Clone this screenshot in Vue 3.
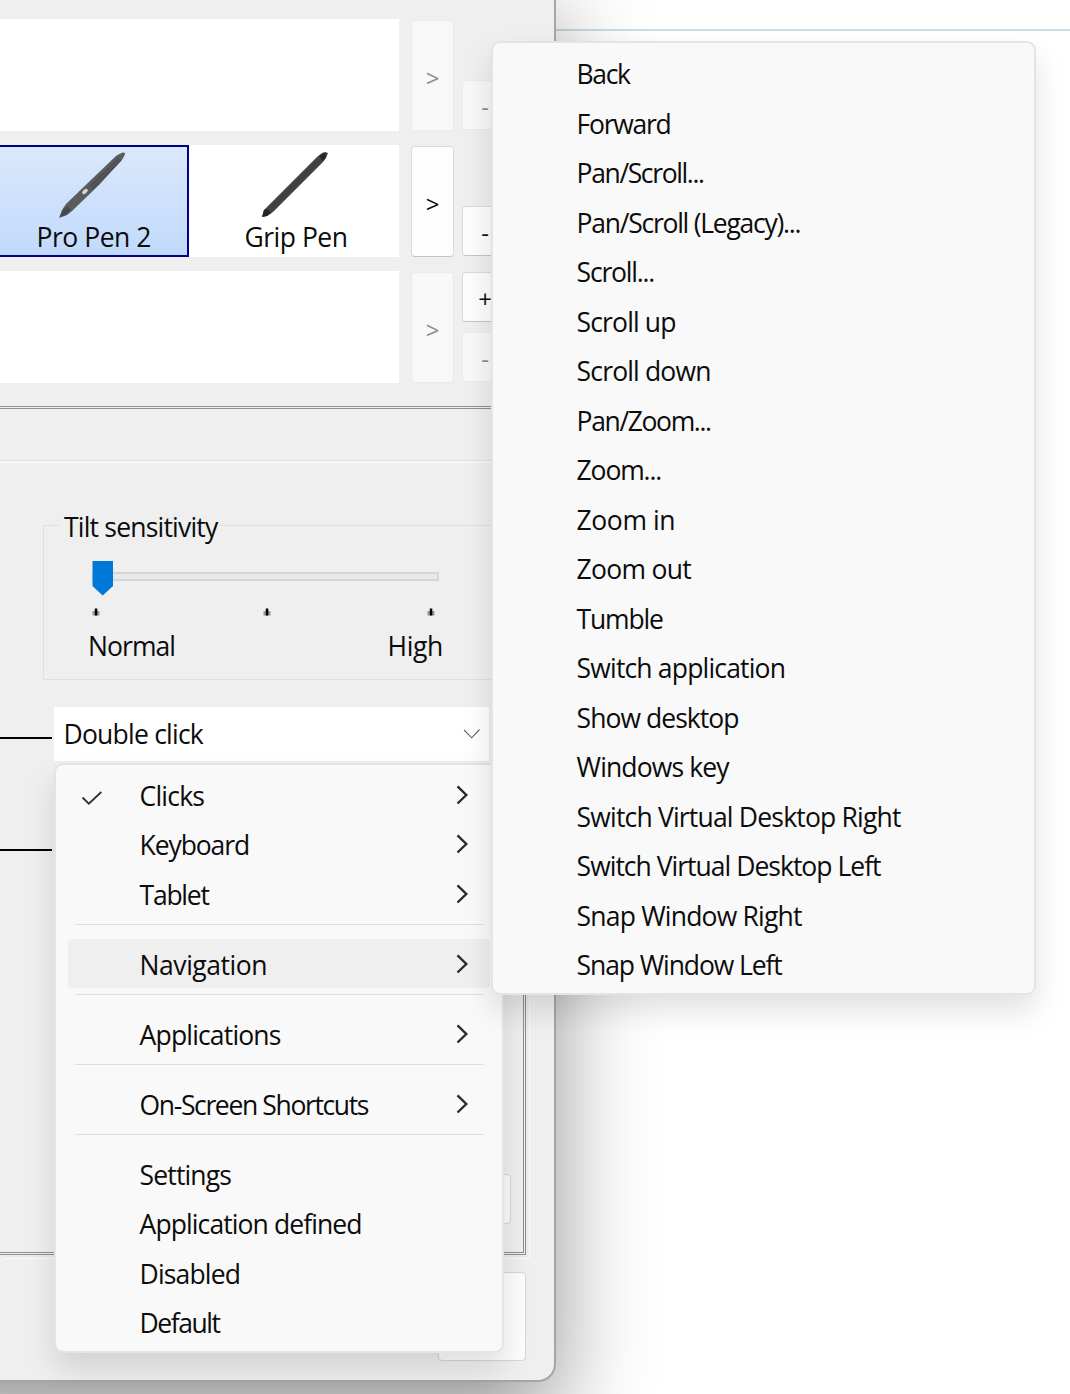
<script setup>
// Each label carries the width its text should occupy; tracking is derived from it.
const vFit = (el, { value }) => {
  el.style.letterSpacing = '0px'
  const natural = el.getBoundingClientRect().width
  el.style.letterSpacing = `${(value - natural) / el.textContent.length}px`
}

const deviceRows = [
  { tools: [], active: false, plus: false },
  {
    tools: [
      { name: 'Pro Pen 2', width: 114.5, selected: true },
      { name: 'Grip Pen', width: 103, selected: false },
    ],
    active: true,
    plus: false,
  },
  { tools: [], active: false, plus: true },
]

const actionGroups = [
  [
    { label: 'Clicks', width: 64.5, sub: true, checked: true },
    { label: 'Keyboard', width: 109.5, sub: true },
    { label: 'Tablet', width: 69, sub: true },
  ],
  [{ label: 'Navigation', width: 127.5, sub: true, open: true }],
  [{ label: 'Applications', width: 141, sub: true }],
  [{ label: 'On-Screen Shortcuts', width: 228.5, sub: true }],
  [
    { label: 'Settings', width: 91.5 },
    { label: 'Application defined', width: 222 },
    { label: 'Disabled', width: 100.5 },
    { label: 'Default', width: 80 },
  ],
]

const navigation = [
  ['Back', 53], ['Forward', 94], ['Pan/Scroll...', 127], ['Pan/Scroll (Legacy)...', 223.5],
  ['Scroll...', 77.5], ['Scroll up', 99], ['Scroll down', 134], ['Pan/Zoom...', 134],
  ['Zoom...', 84.5], ['Zoom in', 98.5], ['Zoom out', 114.5], ['Tumble', 86],
  ['Switch application', 208.5], ['Show desktop', 162], ['Windows key', 152],
  ['Switch Virtual Desktop Right', 324], ['Switch Virtual Desktop Left', 304],
  ['Snap Window Right', 225], ['Snap Window Left', 205],
]
</script>

<template>
  <div class="screen">
    <div class="page-rule"></div>

    <div class="window">
      <div class="devices">
        <div v-for="(row, i) in deviceRows" :key="i" class="device-row">
          <div class="list">
            <div v-for="tool in row.tools" :key="tool.name" class="tool" :class="{ selected: tool.selected }">
              <svg v-if="tool.selected" class="pen" width="72" height="70" viewBox="0 0 72 70">
                <path d="M2 66 L5 58 L9 52 L36 26 L59 4 Q66 -1 68 1 Q68 4 64 9 L42 33 L15 59 L10 63 Z" fill="#5a5c5f" />
                <path d="M33 35 L62 6 M35 37 L64 8" stroke="#47494c" stroke-width="1.2" />
                <path d="M3 65 L6 58 L10 54 L14 58 L9 63 Z" fill="#48494c" />
                <ellipse cx="28" cy="39.5" rx="3.2" ry="1.9" transform="rotate(-45 28 39.5)" fill="#d8d8d8" />
              </svg>
              <svg v-else class="pen" width="72" height="70" viewBox="0 0 72 70">
                <path d="M3 65 L5 58 L58 5 L63 1 L66 0 L69 1 L67 6 L64 10 L14 60 L8 64 Z" fill="#414244" />
                <path d="M3 65 L5 58 L8 57 L12 61 L8 64 Z M60 4 L66 1 L67 5 L64 9 Z" fill="#242527" />
              </svg>
              <div class="tool-name"><span v-fit="tool.width">{{ tool.name }}</span></div>
            </div>
          </div>
          <div class="btn next" :class="{ off: !row.active }">&gt;</div>
          <div class="stack">
            <div v-if="row.plus" class="btn small">+</div>
            <div class="btn small" :class="{ off: !row.active }">-</div>
          </div>
        </div>
      </div>

      <div class="frame">
        <div class="tab-strip"></div>
        <div class="tab-page">
          <div class="group">
            <div class="legend"><span v-fit="153.5">Tilt sensitivity</span></div>
            <div class="slider">
              <div class="track"></div>
              <svg class="thumb" width="22" height="35" viewBox="0 0 22 35">
                <path d="M.5 0 H21 V25 L10.7 34.5 L.5 25 Z" fill="#0078d7" />
              </svg>
            </div>
            <div class="ticks">
              <svg v-for="n in 3" :key="n" width="8" height="8" viewBox="0 0 8 8">
                <path d="M.5 3 H7.5 V7.5 H.5 Z" fill="#999" />
                <path d="M2.8 .5 H5.3 V7.5 H2.8 Z" fill="#000" />
              </svg>
            </div>
            <div class="scale">
              <div><span v-fit="87">Normal</span></div>
              <div><span v-fit="55.5">High</span></div>
            </div>
          </div>
          <div class="setting">
            <div class="leader"></div>
            <div class="combo">
              <div><span v-fit="139.5">Double click</span></div>
              <svg width="18" height="12" viewBox="0 0 18 12">
                <path d="M1 2 L8.7 9.8 L16.5 1.5" fill="none" stroke="#666" stroke-width="1.1" />
              </svg>
            </div>
          </div>
          <div class="leader second"></div>
          <div class="hidden-btn"></div>
        </div>
      </div>
      <div class="footer-btn"></div>
    </div>

    <div class="menu actions">
      <template v-for="(group, g) in actionGroups" :key="g">
        <div v-if="g" class="sep"></div>
        <div v-for="item in group" :key="item.label" class="item" :class="{ open: item.open }">
          <div class="mark">
            <svg v-if="item.checked" width="22" height="16" viewBox="0 0 22 16">
              <path d="M1.5 7.5 L7.8 13.6 L20.3 2" fill="none" stroke="#333" stroke-width="1.9" />
            </svg>
          </div>
          <div class="label"><span v-fit="item.width">{{ item.label }}</span></div>
          <svg v-if="item.sub" class="arrow" width="13" height="20" viewBox="0 0 13 20">
            <path d="M1.5 1.3 L10.3 10 L1.5 18.5" fill="none" stroke="#2b2b2b" stroke-width="2.4" />
          </svg>
        </div>
      </template>
    </div>

    <div class="menu nav">
      <div v-for="[label, width] in navigation" :key="label" class="item">
        <div class="label"><span v-fit="width">{{ label }}</span></div>
      </div>
    </div>
  </div>
</template>

<style>
body {
  margin: 0;
}
</style>

<style scoped>
.screen {
  position: relative;
  width: 1070px;
  height: 1394px;
  overflow: hidden;
  background: #fff;
  color: #0c0c0c;
  font: 26.5px/36px "Open Sans", "Noto Sans", sans-serif;
  font-stretch: 94%;
  white-space: nowrap;
}
.screen * {
  box-sizing: border-box;
}
svg {
  display: block;
  flex: none;
}
.page-rule {
  position: absolute;
  top: 29px;
  left: 0;
  right: 0;
  height: 2px;
  background: #cfdde6;
}
.window {
  position: absolute;
  left: -100px;
  top: -20px;
  width: 656px;
  height: 1402px;
  padding: 39px 0 0 100px;
  background: #efefef;
  border: solid #a5a5a5;
  border-width: 0 2px 2px 0;
  border-radius: 0 0 18px 0;
  box-shadow: 0 38px 96px rgba(0, 0, 0, 0.42);
}
.devices {
  display: flex;
  flex-direction: column;
  gap: 14px;
}
.device-row {
  display: flex;
  height: 112px;
}
.list {
  display: flex;
  width: 399px;
  margin-right: 12px;
  background: #fff;
}
.tool {
  width: 210px;
  padding-top: 7px;
}
.tool.selected {
  width: 189px;
  padding-top: 5px;
  border: 2px solid #00008b;
  border-left: 0;
  background: linear-gradient(#dae8fb, #c1dafc);
}
.pen {
  margin: 0 auto 0 70px;
}
.selected .pen {
  margin-left: 57px;
}
.tool-name {
  margin: -3px 0 0 55.5px;
}
.selected .tool-name {
  margin-left: 36.5px;
}
.btn {
  display: flex;
  justify-content: center;
  align-items: center;
  background: #fdfdfd;
  border: 1px solid #dadada;
  border-bottom-color: #c4c4c4;
  border-radius: 4px;
  font-size: 24px;
}
.btn.off {
  background: #f8f8f8;
  border-color: #ebebeb;
  color: #8d8d8d;
}
.next {
  width: 43px;
  height: 111px;
  margin: 1px 8px 0 0;
  padding-top: 5px;
}
.stack {
  display: flex;
  flex-direction: column;
  justify-content: flex-end;
  gap: 10px;
  padding-bottom: 1px;
}
.small {
  width: 46px;
  height: 50px;
  padding-top: 3px;
}
.frame {
  width: 526px;
  height: 849px;
  margin-top: 23px;
  border: solid #8f8f8f;
  border-width: 3px 3px 3px 0;
  border-style: double;
  border-left: 0;
  box-shadow: 3px 3px 0 #ececec, 4px 4px 0 #fafafa;
}
.tab-strip {
  height: 54px;
  border-bottom: 2px solid #f8f8f8;
  box-shadow: inset 0 -1px #e1e1e1;
}
.tab-page {
  padding-top: 62px;
}
.group {
  width: 470px;
  height: 155px;
  margin-left: 43px;
  border: 1px solid #e0e0e0;
}
.legend {
  width: 160px;
  height: 36px;
  margin: -17px 0 0 15px;
  padding-left: 5px;
  background: #efefef;
}
.slider {
  position: relative;
  width: 347px;
  height: 35px;
  margin: 16px 0 0 48px;
  padding-top: 11px;
}
.track {
  height: 9px;
  border: 2px solid #d6d6d6;
  background: #e7eaea;
}
.thumb {
  position: absolute;
  left: 0;
  top: 0;
}
.ticks {
  display: flex;
  width: 343px;
  margin: 12px 0 0 48px;
}
.ticks svg:nth-child(2) {
  margin: 0 156px 0 163px;
}
.scale {
  display: flex;
  justify-content: space-between;
  width: 355px;
  margin: 12px 0 0 44px;
}
.setting {
  display: flex;
  align-items: center;
  margin-top: 27px;
}
.leader {
  width: 52px;
  height: 2px;
  margin: 7px 2px 0 0;
  background: #000;
}
.combo {
  display: flex;
  align-items: center;
  justify-content: space-between;
  width: 435px;
  height: 54px;
  padding: 0 8px 0 9.5px;
  background: #fff;
}
.second {
  margin-top: 88px;
}
.hidden-btn {
  width: 60px;
  height: 50px;
  margin: 323px 0 0 451px;
  background: #fafafa;
  border: 1px solid #d4d4d4;
  border-radius: 4px;
}
.footer-btn {
  width: 88px;
  height: 89px;
  margin: 17px 0 0 438px;
  background: #fdfdfd;
  border: 1px solid #d6d6d6;
  border-radius: 4px;
}
.menu {
  position: absolute;
  background: #f9f9f9;
  border: 2px solid #e4e4e4;
  border-radius: 9px;
  box-shadow: 0 16px 30px rgba(0, 0, 0, 0.12);
  background-clip: padding-box;
}
.actions {
  left: 54px;
  top: 763px;
  width: 450px;
  height: 590px;
  padding: 4.5px 12px 0;
}
.nav {
  left: 491px;
  top: 41px;
  width: 544.5px;
  height: 953.5px;
  padding: 4.9px 0 0 83.6px;
}
.item {
  display: flex;
  align-items: center;
  height: 49.5px;
  border-radius: 4px;
}
.item.open {
  background: #efefef;
}
.mark {
  width: 71.6px;
  padding: 7px 0 0 13px;
}
.label {
  flex: 1;
  padding-top: 3px;
}
.arrow {
  margin: 1px 21px 0 0;
}
.sep {
  height: 1px;
  margin: 5.5px 6.5px 14px 6.5px;
  background: #dfdfdf;
}
</style>
